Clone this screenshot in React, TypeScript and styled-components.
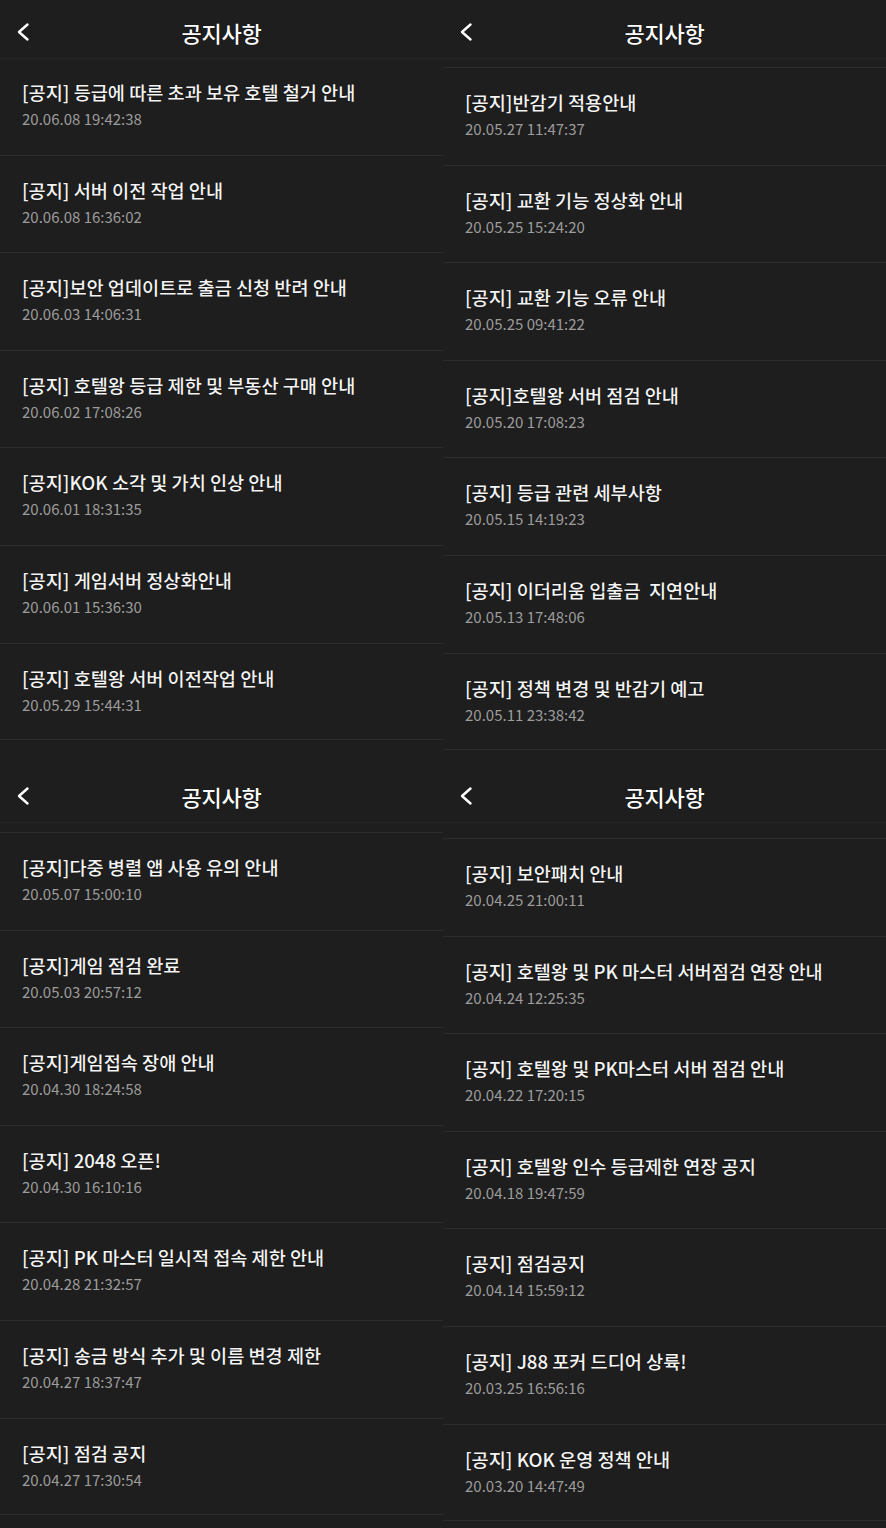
import React from 'react';
import styled, { createGlobalStyle } from 'styled-components';

const GlobalStyle = createGlobalStyle`
  html, body {
    margin: 0;
    padding: 0;
    background: #1e1e1e;
  }
  body {
    font-family: "Noto Sans CJK KR", "Noto Sans", sans-serif;
  }
`;

const Board = styled.div`
  display: grid;
  grid-template-columns: 443px 443px;
  grid-template-rows: 764px 764px;
  width: 886px;
  background: #1e1e1e;
`;

const Panel = styled.section`
  display: flex;
  flex-direction: column;
  height: 764px;
  overflow: hidden;
  background: #1e1e1e;
`;

const Header = styled.header`
  position: relative;
  display: flex;
  align-items: center;
  justify-content: center;
  height: 58px;
  flex-shrink: 0;
  border-bottom: 1px solid #242424;
`;

const BackButton = styled.button`
  position: absolute;
  left: 13px;
  top: 20px;
  display: flex;
  align-items: center;
  justify-content: center;
  width: 20px;
  height: 24px;
  padding: 0;
  border: none;
  background: none;
  cursor: pointer;
`;

const HeaderTitle = styled.h1`
  margin: 0;
  margin-top: 6px;
  font-size: 22px;
  font-weight: 500;
  color: #ffffff;
  letter-spacing: -0.2px;
  text-shadow: 0 0 1px #000;
`;

const Viewport = styled.div`
  flex: 1;
  overflow: hidden;
`;

const List = styled.ul<{ $offset: number }>`
  list-style: none;
  margin: ${p => p.$offset}px 0 0;
  padding: 0;
`;

const Row = styled.li`
  box-sizing: border-box;
  display: flex;
  flex-direction: column;
  height: 97.6px;
  padding: 21px 22px 0;
  border-top: 1px solid #2c2c2c;

  &:last-child {
    border-bottom: 1px solid #2c2c2c;
  }
`;

const RowTitle = styled.div`
  font-size: 18.6px;
  line-height: 26px;
  font-weight: 500;
  color: #f4f4f4;
  white-space: pre;
  text-shadow: 0 0 1px #000;
`;

const RowDate = styled.div`
  margin-top: 4px;
  font-size: 15px;
  line-height: 20px;
  color: #9c9c9c;
`;

const Chevron = () => (
  <svg width="14" height="20" viewBox="0 0 14 20" fill="none">
    <polyline
      points="11.5,2.5 3,10 11.5,17.5"
      stroke="#ffffff"
      strokeWidth="2.4"
      strokeLinecap="round"
      strokeLinejoin="round"
    />
  </svg>
);

interface Notice {
  title: string;
  date: string;
}

interface PanelData {
  offset: number;
  items: Notice[];
}

const panels: PanelData[] = [
  {
    offset: -2,
    items: [
      { title: '[공지] 등급에 따른 초과 보유 호텔 철거 안내', date: '20.06.08 19:42:38' },
      { title: '[공지] 서버 이전 작업 안내', date: '20.06.08 16:36:02' },
      { title: '[공지]보안 업데이트로 출금 신청 반려 안내', date: '20.06.03 14:06:31' },
      { title: '[공지] 호텔왕 등급 제한 및 부동산 구매 안내', date: '20.06.02 17:08:26' },
      { title: '[공지]KOK 소각 및 가치 인상 안내', date: '20.06.01 18:31:35' },
      { title: '[공지] 게임서버 정상화안내', date: '20.06.01 15:36:30' },
      { title: '[공지] 호텔왕 서버 이전작업 안내', date: '20.05.29 15:44:31' },
    ],
  },
  {
    offset: 8,
    items: [
      { title: '[공지]반감기 적용안내', date: '20.05.27 11:47:37' },
      { title: '[공지] 교환 기능 정상화 안내', date: '20.05.25 15:24:20' },
      { title: '[공지] 교환 기능 오류 안내', date: '20.05.25 09:41:22' },
      { title: '[공지]호텔왕 서버 점검 안내', date: '20.05.20 17:08:23' },
      { title: '[공지] 등급 관련 세부사항', date: '20.05.15 14:19:23' },
      { title: '[공지] 이더리움 입출금  지연안내', date: '20.05.13 17:48:06' },
      { title: '[공지] 정책 변경 및 반감기 예고', date: '20.05.11 23:38:42' },
    ],
  },
  {
    offset: 9,
    items: [
      { title: '[공지]다중 병렬 앱 사용 유의 안내', date: '20.05.07 15:00:10' },
      { title: '[공지]게임 점검 완료', date: '20.05.03 20:57:12' },
      { title: '[공지]게임접속 장애 안내', date: '20.04.30 18:24:58' },
      { title: '[공지] 2048 오픈!', date: '20.04.30 16:10:16' },
      { title: '[공지] PK 마스터 일시적 접속 제한 안내', date: '20.04.28 21:32:57' },
      { title: '[공지] 송금 방식 추가 및 이름 변경 제한', date: '20.04.27 18:37:47' },
      { title: '[공지] 점검 공지', date: '20.04.27 17:30:54' },
    ],
  },
  {
    offset: 15,
    items: [
      { title: '[공지] 보안패치 안내', date: '20.04.25 21:00:11' },
      { title: '[공지] 호텔왕 및 PK 마스터 서버점검 연장 안내', date: '20.04.24 12:25:35' },
      { title: '[공지] 호텔왕 및 PK마스터 서버 점검 안내', date: '20.04.22 17:20:15' },
      { title: '[공지] 호텔왕 인수 등급제한 연장 공지', date: '20.04.18 19:47:59' },
      { title: '[공지] 점검공지', date: '20.04.14 15:59:12' },
      { title: '[공지] J88 포커 드디어 상륙!', date: '20.03.25 16:56:16' },
      { title: '[공지] KOK 운영 정책 안내', date: '20.03.20 14:47:49' },
    ],
  },
];

const NoticePanel: React.FC<PanelData> = ({ offset, items }) => (
  <Panel>
    <Header>
      <BackButton aria-label="뒤로">
        <Chevron />
      </BackButton>
      <HeaderTitle>공지사항</HeaderTitle>
    </Header>
    <Viewport>
      <List $offset={offset}>
        {items.map(item => (
          <Row key={item.date}>
            <RowTitle>{item.title}</RowTitle>
            <RowDate>{item.date}</RowDate>
          </Row>
        ))}
      </List>
    </Viewport>
  </Panel>
);

const App: React.FC = () => (
  <>
    <GlobalStyle />
    <Board>
      {panels.map((p, i) => (
        <NoticePanel key={i} offset={p.offset} items={p.items} />
      ))}
    </Board>
  </>
);

export default App;
